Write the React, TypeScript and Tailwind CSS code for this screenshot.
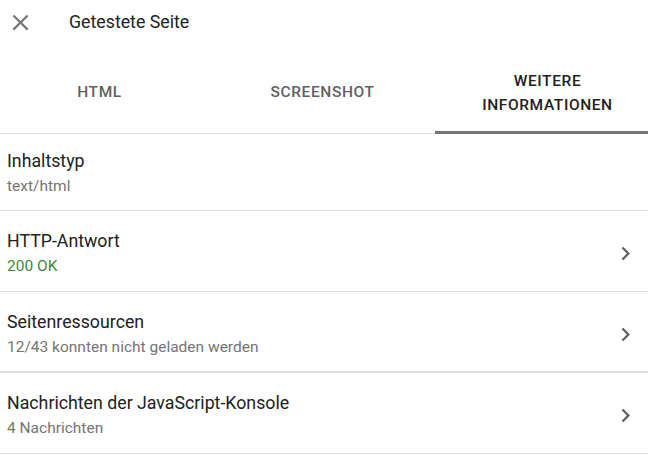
const rows = [
  { title: 'Inhaltstyp', sub: 'text/html', arrow: false, green: false },
  { title: 'HTTP-Antwort', sub: '200 OK', arrow: true, green: true },
  { title: 'Seitenressourcen', sub: '12/43 konnten nicht geladen werden', arrow: true, green: false },
  { title: 'Nachrichten der JavaScript-Konsole', sub: '4 Nachrichten', arrow: true, green: false },
];

const CloseIcon = () => (
  <svg viewBox="0 0 24 24" className="h-[27px] w-[27px] fill-[#757575]">
    <path d="M19 6.41L17.59 5 12 10.59 6.41 5 5 6.41 10.59 12 5 17.59 6.41 19 12 13.41 17.59 19 19 17.59 13.41 12z" />
  </svg>
);

const Chevron = () => (
  <svg viewBox="0 0 24 24" className="mt-[3px] h-[27px] w-[27px] fill-[#616161]">
    <path d="M10 6L8.59 7.41 13.17 12l-4.58 4.59L10 18l6-6z" />
  </svg>
);

export default function App() {
  return (
    <div className="h-[459px] w-[648px] overflow-hidden bg-white font-['Roboto',sans-serif] text-[#212121]">
      {/* Kopfzeile */}
      <div className="flex h-[44px] items-center">
        <div className="flex w-[69px] items-center pl-[7px]">
          <CloseIcon />
        </div>
        <span className="text-[17.75px]">Getestete Seite</span>
      </div>

      {/* Tabs */}
      <div className="flex h-[90px] border-b border-[#e0e0e0] pt-[9px]">
        <div className="flex w-[199px] items-center justify-center text-[15.5px] font-medium tracking-[0.6px] text-[#616161]">
          HTML
        </div>
        <div className="flex w-[236px] items-center justify-center pl-[11px] text-[15.5px] font-medium tracking-[0.6px] text-[#616161]">
          SCREENSHOT
        </div>
        <div className="relative flex flex-1 flex-col items-center justify-center pl-[12px] text-[15.5px] font-medium leading-[24px] tracking-[0.6px] text-[#212121]">
          <span>WEITERE</span>
          <span>INFORMATIONEN</span>
          <div className="absolute right-0 bottom-[-1px] left-0 h-[3px] bg-[#757575]" />
        </div>
      </div>

      {/* Liste */}
      {rows.map((r, i) => (
        <div
          key={r.title}
          className={`flex items-start border-b border-[#e0e0e0] pr-[9px] pl-[7px] ${i === 0 ? 'h-[77px] pt-[14px]' : 'h-[81px] pt-[17px]'} ${i === 2 ? 'border-b-2' : ''}`}
        >
          <div className="flex flex-1 flex-col">
            <span className="text-[17.75px] leading-[26px]">{r.title}</span>
            <span className={`text-[15.5px] leading-[24px] ${r.green ? 'text-[#3b8a40]' : 'text-[#757575]'}`}>
              {r.sub}
            </span>
          </div>
          {r.arrow && (
            <div className="flex h-[48px] items-center">
              <Chevron />
            </div>
          )}
        </div>
      ))}
    </div>
  );
}
